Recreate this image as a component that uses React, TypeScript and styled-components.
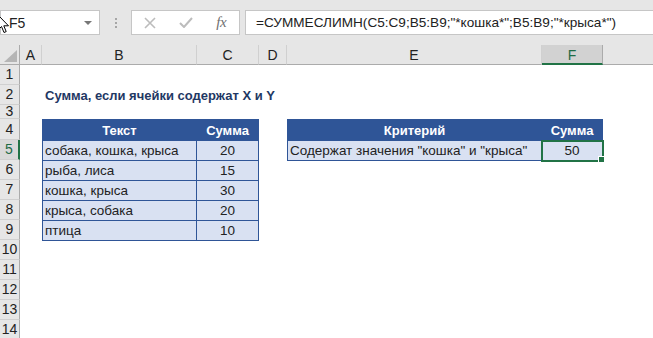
import styled, { createGlobalStyle } from "styled-components";

const GlobalStyle = createGlobalStyle`
  body {
    margin: 0;
    background: #ffffff;
    font-family: "Liberation Sans", Arial, sans-serif;
  }
`;

const Window = styled.div`
  width: 653px;
  height: 338px;
  overflow: hidden;
  display: flex;
  flex-direction: column;
  background: #ffffff;
`;

const Toolbar = styled.div`
  height: 45px;
  flex: none;
  box-sizing: border-box;
  padding-top: 10px;
  background: #e6e6e6;
  display: flex;
  align-items: flex-start;
  position: relative;
`;

const Box = styled.div<{ $width: string }>`
  width: ${(p) => p.$width};
  height: 25px;
  box-sizing: border-box;
  background: #ffffff;
  border: 1px solid #c6c6c6;
  display: flex;
  align-items: center;
  flex: none;
`;

const NameText = styled.span`
  flex: 1;
  padding-left: 8px;
  font-size: 14px;
  color: #222;
`;

const DropArrow = styled.span`
  width: 0;
  height: 0;
  margin-right: 7px;
  border-left: 4px solid transparent;
  border-right: 4px solid transparent;
  border-top: 4px solid #777;
`;

const Dots = styled.div`
  width: 31px;
  height: 25px;
  flex: none;
  display: flex;
  flex-direction: column;
  align-items: center;
  justify-content: center;
  gap: 2px;
`;

const Dot = styled.span`
  width: 2px;
  height: 2px;
  background: #a6a6a6;
`;

const IconSlot = styled.span`
  width: 36px;
  display: flex;
  align-items: center;
  justify-content: center;
`;

const Fx = styled.span`
  font-family: "Liberation Serif", "Times New Roman", serif;
  font-style: italic;
  font-size: 15px;
  color: #707070;
  letter-spacing: -0.5px;
`;

const FormulaText = styled.span`
  padding-left: 10px;
  font-size: 13.6px;
  color: #222;
  white-space: nowrap;
`;

const Cursor = styled.svg`
  position: absolute;
  left: -3px;
  top: 14px;
`;

const Sheet = styled.div`
  flex: 1;
  display: grid;
  grid-template-columns: 20px 22px 155px 62px 28px 255px 61px 1fr;
  grid-template-rows: 20px 20px 20px 14px 21px repeat(10, 20px);
  font-size: 13.5px;
  color: #222;
`;

const Corner = styled.div`
  grid-column: 1;
  grid-row: 1;
  background: #e6e6e6;
  border-right: 1px solid #ababab;
  border-bottom: 1px solid #ababab;
  position: relative;
  &::after {
    content: "";
    position: absolute;
    right: 2px;
    bottom: 2px;
    border-left: 13px solid transparent;
    border-bottom: 12px solid #b5b5b5;
  }
`;

const ColHead = styled.div<{ $col: number; $active?: boolean }>`
  grid-column: ${(p) => p.$col};
  grid-row: 1;
  background: ${(p) => (p.$active ? "#d2d2d2" : "#e6e6e6")};
  color: ${(p) => (p.$active ? "#1e6b45" : "#222")};
  border-right: 1px solid ${(p) => (p.$active ? "#ababab" : "#d0d0d0")};
  border-bottom: ${(p) => (p.$active ? "2px solid #217346" : "1px solid #ababab")};
  display: flex;
  align-items: center;
  justify-content: center;
  font-size: 14px;
  padding-top: ${(p) => (p.$active ? "1px" : "0")};
`;

const RowHead = styled.div<{ $row: number; $active?: boolean }>`
  grid-column: 1;
  grid-row: ${(p) => p.$row};
  background: ${(p) => (p.$active ? "#d9d9d9" : "#e6e6e6")};
  color: ${(p) => (p.$active ? "#1e6b45" : "#222")};
  border-right: ${(p) => (p.$active ? "2px solid #217346" : "1px solid #ababab")};
  border-bottom: 1px solid #d0d0d0;
  display: flex;
  align-items: center;
  justify-content: center;
  font-size: 14px;
  line-height: 13px;
`;

const Title = styled.div`
  grid-column: 3 / 7;
  grid-row: 3;
  display: flex;
  align-items: center;
  padding-left: 3px;
  font-size: 13px;
  font-weight: bold;
  color: #1f3864;
  white-space: nowrap;
`;

const Table = styled.div<{ $cols: string; $area: string }>`
  grid-area: ${(p) => p.$area};
  display: grid;
  grid-template-columns: ${(p) => p.$cols};
  grid-template-rows: 21px;
  grid-auto-rows: 20px;
  border-top: 1px solid #2f5597;
  border-left: 1px solid #2f5597;
  align-self: start;
  background: #d9e1f2;
`;

const Cell = styled.div<{ $head?: boolean; $align?: string; $selected?: boolean }>`
  position: relative;
  border-right: 1px solid #2f5597;
  border-bottom: 1px solid #2f5597;
  background: ${(p) => (p.$head ? "#2f5597" : "#d9e1f2")};
  color: ${(p) => (p.$head ? "#ffffff" : "#222")};
  font-weight: ${(p) => (p.$head ? "bold" : "normal")};
  font-size: ${(p) => (p.$head ? "13px" : "13.5px")};
  display: flex;
  align-items: center;
  justify-content: ${(p) => p.$align ?? "flex-start"};
  padding: 0 2px;
  white-space: nowrap;
  ${(p) =>
    p.$selected &&
    `
    outline: 2px solid #217346;
    outline-offset: -1px;
    &::after {
      content: "";
      position: absolute;
      right: -3px;
      bottom: -3px;
      width: 5px;
      height: 5px;
      background: #217346;
      border: 1px solid #fff;
    }
  `}
`;

const cols = ["A", "B", "C", "D", "E", "F"];
const rows = [
  ["собака, кошка, крыса", "20"],
  ["рыба, лиса", "15"],
  ["кошка, крыса", "30"],
  ["крыса, собака", "20"],
  ["птица", "10"],
];

export default function App() {
  return (
    <Window>
      <GlobalStyle />
      <Toolbar>
        <Box $width="100px">
          <NameText>F5</NameText>
          <DropArrow />
        </Box>
        <Dots>
          <Dot />
          <Dot />
          <Dot />
        </Dots>
        <Box $width="109px">
          <IconSlot>
            <svg width="12" height="12" viewBox="0 0 12 12">
              <path d="M1 1 L11 11 M11 1 L1 11" stroke="#bcbcbc" strokeWidth="1.6" />
            </svg>
          </IconSlot>
          <IconSlot>
            <svg width="14" height="11" viewBox="0 0 14 11">
              <path d="M1 6 L5 10 L13 1" stroke="#bcbcbc" strokeWidth="2" fill="none" />
            </svg>
          </IconSlot>
          <IconSlot>
            <Fx>fx</Fx>
          </IconSlot>
        </Box>
        <Box $width="420px" style={{ marginLeft: "5px" }}>
          <FormulaText>=СУММЕСЛИМН(C5:C9;B5:B9;"*кошка*";B5:B9;"*крыса*")</FormulaText>
        </Box>
        <Cursor width="12" height="20" viewBox="0 0 12 20">
          <path d="M1 1 L1 16 L4.5 12.5 L7 18.5 L9.2 17.6 L6.8 11.8 L11.5 11.8 Z" fill="#fff" stroke="#000" strokeWidth="1" />
        </Cursor>
      </Toolbar>
      <Sheet>
        <Corner />
        {cols.map((c, i) => (
          <ColHead key={c} $col={i + 2} $active={c === "F"}>
            {c}
          </ColHead>
        ))}
        <ColHead $col={8} style={{ borderRight: "none" }} />
        {Array.from({ length: 14 }, (_, i) => (
          <RowHead key={i} $row={i + 2} $active={i + 1 === 5}>
            {i + 1}
          </RowHead>
        ))}
        <Title>Сумма, если ячейки содержат X и Y</Title>
        <Table $cols="154px 62px" $area="5 / 3 / 11 / 5">
          <Cell $head $align="center">Текст</Cell>
          <Cell $head $align="center">Сумма</Cell>
          {rows.map(([t, n]) => (
            <>
              <Cell key={t}>{t}</Cell>
              <Cell key={t + n} $align="center">{n}</Cell>
            </>
          ))}
        </Table>
        <Table $cols="254px 61px" $area="5 / 6 / 7 / 8">
          <Cell $head $align="center">Критерий</Cell>
          <Cell $head $align="center">Сумма</Cell>
          <Cell>Содержат значения "кошка" и "крыса"</Cell>
          <Cell $align="center" $selected>50</Cell>
        </Table>
      </Sheet>
    </Window>
  );
}
